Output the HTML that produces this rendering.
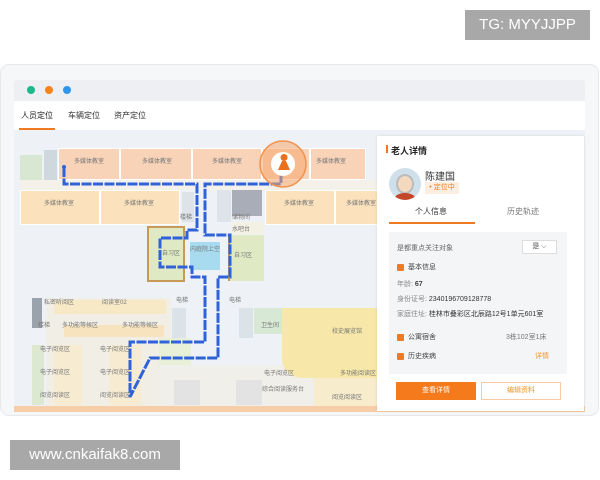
<!DOCTYPE html>
<html><head><meta charset="utf-8"><style>
*{margin:0;padding:0;box-sizing:border-box}
body{width:600px;height:480px;background:#fff;position:relative;overflow:hidden;font-family:"Liberation Sans","Noto Sans CJK SC",sans-serif}
.a{position:absolute}
.t{position:absolute;font-size:6px;color:#777;white-space:nowrap}
.s{background:#f8d3b8;border:1px solid #fff}
.w{background:#fbe2bd;border:1px solid #fff}
.g{background:#dfeac4;border:2px solid #c89a5a}
.p{font-size:8px;color:#666;position:absolute;white-space:nowrap}
.cb{position:absolute;width:7px;height:7px;background:#f07a22;border-radius:1px}
</style></head><body>
<div class="a" style="left:465px;top:10px;width:125px;height:30px;background:#a8a8a8;color:#fff;font-size:15px;line-height:30px;text-align:center">TG: MYYJJPP</div>
<div class="a" style="left:0;top:64px;width:599px;height:352px;background:#f6f7f9;border:1px solid #e6e8ec;border-radius:9px"></div>
<div class="a" style="left:14px;top:80px;width:571px;height:21px;background:#eeeff2;border-radius:3px 3px 0 0"></div>
<div class="a" style="left:27px;top:86px;width:8px;height:8px;border-radius:50%;background:#1bb98a"></div>
<div class="a" style="left:45px;top:86px;width:8px;height:8px;border-radius:50%;background:#f4821f"></div>
<div class="a" style="left:63px;top:86px;width:8px;height:8px;border-radius:50%;background:#2f96ef"></div>
<div class="a" style="left:14px;top:101px;width:571px;height:29px;background:#fff"></div>
<div class="a" style="left:21px;top:110px;font-size:8px;color:#222">人员定位</div>
<div class="a" style="left:68px;top:110px;font-size:8px;color:#333">车辆定位</div>
<div class="a" style="left:114px;top:110px;font-size:8px;color:#333">资产定位</div>
<div class="a" style="left:19px;top:128px;width:36px;height:2px;background:#f07a22"></div>
<!-- map -->
<div class="a" style="left:14px;top:130px;width:571px;height:282px;background:#eef1f6;overflow:hidden">
 <div class="a" style="left:6px;top:25px;width:22px;height:25px;background:#d8e7d2"></div>
 <div class="a" style="left:30px;top:20px;width:13px;height:30px;background:#cfd8dc"></div>
 <div class="a s" style="left:44px;top:18px;width:62px;height:32px"></div>
 <div class="a s" style="left:106px;top:18px;width:72px;height:32px"></div>
 <div class="a s" style="left:178px;top:18px;width:70px;height:32px"></div>
 <div class="a s" style="left:248px;top:18px;width:48px;height:32px"></div>
 <div class="a s" style="left:296px;top:18px;width:56px;height:32px"></div>
 <div class="a" style="left:6px;top:50px;width:360px;height:10px;background:#f4f1ea"></div>
 <div class="a w" style="left:6px;top:60px;width:80px;height:35px"></div>
 <div class="a w" style="left:86px;top:60px;width:80px;height:35px"></div>
 <div class="a" style="left:168px;top:62px;width:12px;height:30px;background:#dde3e8"></div>
 <div class="a" style="left:203px;top:60px;width:14px;height:32px;background:#dde3e8"></div>
 <div class="a" style="left:218px;top:60px;width:30px;height:26px;background:#a9adb8"></div>
 <div class="a w" style="left:251px;top:60px;width:70px;height:35px"></div>
 <div class="a w" style="left:321px;top:60px;width:50px;height:35px"></div>
 <div class="a g" style="left:133px;top:96px;width:38px;height:56px"></div>
 <div class="a" style="left:176px;top:112px;width:30px;height:28px;background:#a8dbef"></div>
 <div class="a" style="left:218px;top:92px;width:32px;height:12px;background:#f3f0e4"></div>
 <div class="a" style="left:214px;top:105px;width:36px;height:46px;background:#dfeac4;border-left:2px solid #c89a5a"></div>
 <div class="a" style="left:32px;top:168px;width:125px;height:110px;background:#f1eee6"></div>
 <div class="a" style="left:18px;top:168px;width:10px;height:30px;background:#9aa2ab"></div>
 <div class="a" style="left:40px;top:170px;width:112px;height:14px;background:#f7e9c6"></div>
 <div class="a" style="left:50px;top:195px;width:100px;height:12px;background:#f7e4be"></div>
 <div class="a" style="left:40px;top:215px;width:28px;height:60px;background:#f7ecd2"></div>
 <div class="a" style="left:95px;top:215px;width:32px;height:60px;background:#f7ecd2"></div>
 <div class="a" style="left:18px;top:215px;width:12px;height:60px;background:#dce8cf"></div>
 <div class="a" style="left:158px;top:178px;width:14px;height:30px;background:#dce3e8"></div>
 <div class="a" style="left:225px;top:178px;width:14px;height:30px;background:#dce3e8"></div>
 <div class="a" style="left:240px;top:178px;width:28px;height:26px;background:#d7e8d4"></div>
 <div class="a" style="left:145px;top:208px;width:32px;height:50px;background:#e8f0d8"></div>
 <div class="a" style="left:145px;top:235px;width:230px;height:45px;background:#f1efea"></div>
 <div class="a" style="left:160px;top:250px;width:26px;height:25px;background:#e3e3e3"></div>
 <div class="a" style="left:222px;top:250px;width:26px;height:25px;background:#e3e3e3"></div>
 <div class="a" style="left:268px;top:178px;width:108px;height:70px;background:#f7e7a8;border-radius:0 0 0 20px"></div>
 <div class="a" style="left:300px;top:248px;width:76px;height:30px;background:#f7eccc"></div>
 <div class="a" style="left:0;top:276px;width:571px;height:6px;background:#f6cda6"></div>
 <svg class="a" style="left:0;top:0" width="571" height="282">
  <polyline fill="none" stroke="#2f62d8" stroke-width="3" stroke-dasharray="10 1.5" points="50,37 50,54 183,54 183,100 173,100 173,108 146,108 146,137 178,137 178,147 191,147 191,212 116,212 116,267 136,228 204,228 204,147 216,147 216,105 191,105 191,54 267,54 267,38"/>
  <circle cx="50" cy="37" r="2" fill="#2f62d8"/>
  <circle cx="269" cy="34" r="23" fill="#f7a86e" fill-opacity=".55" stroke="#f29350" stroke-width="1.5"/>
  <circle cx="269" cy="34" r="12" fill="#fff"/>
  <path d="M264 40 L268 31 L272 31 L276 40 Z M270 24 a3.5 3.5 0 1 0 0.1 0" fill="#e8701e"/>
 </svg>
 <div class="t" style="left:60px;top:26px">多媒体教室</div>
 <div class="t" style="left:128px;top:26px">多媒体教室</div>
 <div class="t" style="left:198px;top:26px">多媒体教室</div>
 <div class="t" style="left:302px;top:26px">多媒体教室</div>
 <div class="t" style="left:30px;top:68px">多媒体教室</div>
 <div class="t" style="left:110px;top:68px">多媒体教室</div>
 <div class="t" style="left:270px;top:68px">多媒体教室</div>
 <div class="t" style="left:332px;top:68px">多媒体教室</div>
 <div class="t" style="left:166px;top:82px">楼梯</div>
 <div class="t" style="left:218px;top:82px">储物间</div>
 <div class="t" style="left:218px;top:94px">水吧台</div>
 <div class="t" style="left:176px;top:114px">内庭院上空</div>
 <div class="t" style="left:148px;top:118px">自习区</div>
 <div class="t" style="left:220px;top:120px">自习区</div>
 <div class="t" style="left:162px;top:165px">电梯</div>
 <div class="t" style="left:215px;top:165px">电梯</div>
 <div class="t" style="left:247px;top:190px">卫生间</div>
 <div class="t" style="left:318px;top:196px">校史展览馆</div>
 <div class="t" style="left:30px;top:167px">私密听阅区</div>
 <div class="t" style="left:88px;top:167px">阅读室02</div>
 <div class="t" style="left:48px;top:190px">多功能等候区</div>
 <div class="t" style="left:108px;top:190px">多功能等候区</div>
 <div class="t" style="left:24px;top:190px">楼梯</div>
 <div class="t" style="left:26px;top:214px">电子阅览区</div>
 <div class="t" style="left:86px;top:214px">电子阅览区</div>
 <div class="t" style="left:26px;top:237px">电子阅览区</div>
 <div class="t" style="left:86px;top:237px">电子阅览区</div>
 <div class="t" style="left:26px;top:260px">阅览阅读区</div>
 <div class="t" style="left:86px;top:260px">阅览阅读区</div>
 <div class="t" style="left:250px;top:238px">电子阅览区</div>
 <div class="t" style="left:326px;top:238px">多功能阅读区</div>
 <div class="t" style="left:248px;top:254px">综合阅读服务台</div>
 <div class="t" style="left:318px;top:262px">阅览阅读区</div>
</div>
<!-- panel -->
<div class="a" style="left:377px;top:136px;width:207px;height:275px;background:#fff;box-shadow:0 0 3px rgba(0,0,0,.1)"></div>
<div class="a" style="left:386px;top:145px;width:2px;height:8px;background:#f07a22"></div>
<div class="a" style="left:391px;top:144px;font-size:9px;font-weight:bold;color:#222">老人详情</div>
<div class="a" style="left:389px;top:168px;width:32px;height:32px;border-radius:50%;background:#cfe0ea;overflow:hidden">
 <div class="a" style="left:7px;top:6px;width:18px;height:20px;border-radius:50%;background:#f3d9c0;border:2px solid #bbb"></div>
 <div class="a" style="left:6px;top:25px;width:20px;height:10px;border-radius:50% 50% 0 0;background:#c4472a"></div>
</div>
<div class="a" style="left:425px;top:168px;font-size:10px;color:#333">陈建国</div>
<div class="a" style="left:425px;top:182px;width:34px;height:12px;background:#fdeee2;color:#f07a22;font-size:7px;line-height:12px;text-align:center">• 定位中</div>
<div class="a" style="left:415px;top:206px;font-size:8px;color:#333">个人信息</div>
<div class="a" style="left:507px;top:206px;font-size:8px;color:#777">历史轨迹</div>
<div class="a" style="left:389px;top:222px;width:86px;height:2px;background:#f07a22"></div>
<div class="a" style="left:389px;top:232px;width:178px;height:142px;background:#f4f5f7"></div>
<div class="p" style="left:397px;top:243px;font-size:7px">是都重点关注对象</div>
<div class="a" style="left:522px;top:240px;width:35px;height:14px;background:#fff;border:1px solid #ddd;font-size:7px;color:#555;line-height:12px;text-align:center">是 ⌵</div>
<div class="cb" style="left:397px;top:264px"></div><div class="p" style="left:408px;top:262px;font-size:7px;color:#444">基本信息</div>
<div class="p" style="left:397px;top:279px;font-size:7px;color:#888">年龄: <b style="color:#444">67</b></div>
<div class="p" style="left:397px;top:294px;font-size:7px;color:#888">身份证号: <span style="color:#333">2340196709128778</span></div>
<div class="p" style="left:397px;top:309px;font-size:7px;color:#888">家庭住址: <span style="color:#333">桂林市叠彩区北辰路12号1单元601室</span></div>
<div class="cb" style="left:397px;top:334px"></div><div class="p" style="left:408px;top:332px;font-size:7px;color:#444">公寓宿舍</div>
<div class="p" style="left:506px;top:332px;font-size:7px;color:#777">3栋102室1床</div>
<div class="cb" style="left:397px;top:353px"></div><div class="p" style="left:408px;top:351px;font-size:7px;color:#444">历史疾病</div>
<div class="p" style="left:535px;top:351px;font-size:7px;color:#f0962e">详情</div>
<div class="a" style="left:396px;top:382px;width:80px;height:18px;background:#f47a1c;color:#fff;font-size:7px;line-height:18px;text-align:center">查看详情</div>
<div class="a" style="left:481px;top:382px;width:80px;height:18px;border:1px solid #f7c9a5;color:#f0962e;font-size:7px;line-height:16px;text-align:center">编辑资料</div>
<div class="a" style="left:10px;top:440px;width:170px;height:30px;background:#a8a8a8;color:#fff;font-size:15px;line-height:30px;text-align:center">www.cnkaifak8.com</div>
</body></html>
